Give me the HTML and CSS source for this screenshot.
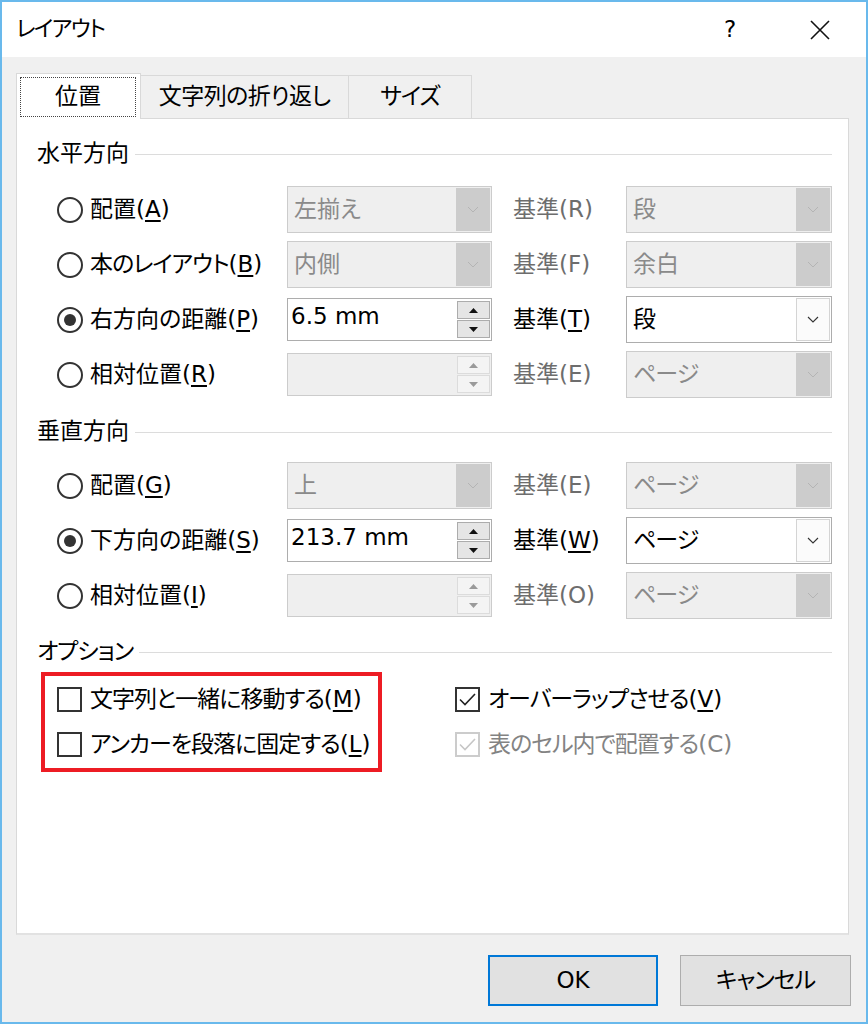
FILE: index.html
```html
<!DOCTYPE html>
<html lang="ja">
<head>
<meta charset="utf-8">
<title>レイアウト</title>
<link rel="stylesheet" href="styles.css">
</head>
<body>
<div class="window">
  <div class="titlebar">
    <span class="title">レイアウト</span>
    <span class="help">?</span>
    <span class="close"><svg width="20" height="20" viewBox="0 0 20 20"><path d="M1 1L19 19M19 1L1 19" stroke="#111" stroke-width="1.6" fill="none"/></svg></span>
  </div>
  <div class="content">
    <div class="tabs">
      <div class="tab active"><span class="focus">位置</span></div>
      <div class="tab t2">文字列の折り返し</div>
      <div class="tab t3">サイズ</div>
    </div>
    <div class="panel">
      <div class="ghead"><span>水平方向</span><i class="rule"></i></div>
      <div class="rows">
        <div class="opt"><span class="radio"></span><span>配置(<u>A</u>)</span></div>
        <div class="combo dis"><span class="val">左揃え</span><span class="dd"><svg width="12" height="7" viewBox="0 0 12 7"><path d="M1 1l5 5 5-5" fill="none" stroke="#b4b4b4" stroke-width="1"/></svg></span></div>
        <div class="base dis">基準(R)</div>
        <div class="combo dis"><span class="val">段</span><span class="dd"><svg width="12" height="7" viewBox="0 0 12 7"><path d="M1 1l5 5 5-5" fill="none" stroke="#b4b4b4" stroke-width="1"/></svg></span></div>

        <div class="opt"><span class="radio"></span><span><span class="k">本のレイアウト</span>(<u>B</u>)</span></div>
        <div class="combo dis"><span class="val">内側</span><span class="dd"><svg width="12" height="7" viewBox="0 0 12 7"><path d="M1 1l5 5 5-5" fill="none" stroke="#b4b4b4" stroke-width="1"/></svg></span></div>
        <div class="base dis">基準(F)</div>
        <div class="combo dis"><span class="val">余白</span><span class="dd"><svg width="12" height="7" viewBox="0 0 12 7"><path d="M1 1l5 5 5-5" fill="none" stroke="#b4b4b4" stroke-width="1"/></svg></span></div>

        <div class="opt"><span class="radio on"></span><span>右方向の距離(<u>P</u>)</span></div>
        <div class="spin"><span class="val">6.5 mm</span><span class="btns"><span class="sb"><svg width="9" height="5" viewBox="0 0 9 5"><path d="M0 5L4.5 0 9 5z" fill="#111"/></svg></span><span class="sb"><svg width="9" height="5" viewBox="0 0 9 5"><path d="M0 0L4.5 5 9 0z" fill="#111"/></svg></span></span></div>
        <div class="base">基準(<u>T</u>)</div>
        <div class="combo"><span class="val">段</span><span class="dd"><svg width="12" height="7" viewBox="0 0 12 7"><path d="M1 1l5 5 5-5" fill="none" stroke="#333" stroke-width="1.1"/></svg></span></div>

        <div class="opt"><span class="radio"></span><span>相対位置(<u>R</u>)</span></div>
        <div class="spin dis"><span class="val"></span><span class="btns"><span class="sb"><svg width="9" height="5" viewBox="0 0 9 5"><path d="M0 5L4.5 0 9 5z" fill="#9a9a9a"/></svg></span><span class="sb"><svg width="9" height="5" viewBox="0 0 9 5"><path d="M0 0L4.5 5 9 0z" fill="#9a9a9a"/></svg></span></span></div>
        <div class="base dis">基準(E)</div>
        <div class="combo dis"><span class="val k">ページ</span><span class="dd"><svg width="12" height="7" viewBox="0 0 12 7"><path d="M1 1l5 5 5-5" fill="none" stroke="#b4b4b4" stroke-width="1"/></svg></span></div>
      </div>

      <div class="ghead g2"><span>垂直方向</span><i class="rule"></i></div>
      <div class="rows r2">
        <div class="opt"><span class="radio"></span><span>配置(<u>G</u>)</span></div>
        <div class="combo dis"><span class="val">上</span><span class="dd"><svg width="12" height="7" viewBox="0 0 12 7"><path d="M1 1l5 5 5-5" fill="none" stroke="#b4b4b4" stroke-width="1"/></svg></span></div>
        <div class="base dis">基準(E)</div>
        <div class="combo dis"><span class="val k">ページ</span><span class="dd"><svg width="12" height="7" viewBox="0 0 12 7"><path d="M1 1l5 5 5-5" fill="none" stroke="#b4b4b4" stroke-width="1"/></svg></span></div>

        <div class="opt"><span class="radio on"></span><span>下方向の距離(<u>S</u>)</span></div>
        <div class="spin"><span class="val">213.7 mm</span><span class="btns"><span class="sb"><svg width="9" height="5" viewBox="0 0 9 5"><path d="M0 5L4.5 0 9 5z" fill="#111"/></svg></span><span class="sb"><svg width="9" height="5" viewBox="0 0 9 5"><path d="M0 0L4.5 5 9 0z" fill="#111"/></svg></span></span></div>
        <div class="base">基準(<u>W</u>)</div>
        <div class="combo"><span class="val k">ページ</span><span class="dd"><svg width="12" height="7" viewBox="0 0 12 7"><path d="M1 1l5 5 5-5" fill="none" stroke="#333" stroke-width="1.1"/></svg></span></div>

        <div class="opt"><span class="radio"></span><span>相対位置(<u>I</u>)</span></div>
        <div class="spin dis"><span class="val"></span><span class="btns"><span class="sb"><svg width="9" height="5" viewBox="0 0 9 5"><path d="M0 5L4.5 0 9 5z" fill="#9a9a9a"/></svg></span><span class="sb"><svg width="9" height="5" viewBox="0 0 9 5"><path d="M0 0L4.5 5 9 0z" fill="#9a9a9a"/></svg></span></span></div>
        <div class="base dis">基準(O)</div>
        <div class="combo dis"><span class="val k">ページ</span><span class="dd"><svg width="12" height="7" viewBox="0 0 12 7"><path d="M1 1l5 5 5-5" fill="none" stroke="#b4b4b4" stroke-width="1"/></svg></span></div>
      </div>

      <div class="ghead g3"><span class="k">オプション</span><i class="rule"></i></div>
      <div class="opts">
        <div class="redbox">
          <div class="chk"><span class="box"></span><span><span class="k">文字列と一緒に移動する</span>(<u>M</u>)</span></div>
          <div class="chk"><span class="box"></span><span><span class="k">アンカーを段落に固定する</span>(<u>L</u>)</span></div>
        </div>
        <div class="rcol">
          <div class="chk"><span class="box"><svg width="19" height="15" viewBox="0 0 19 15"><path d="M2 7.5l5 5L17 2" fill="none" stroke="#222" stroke-width="1.6"/></svg></span><span><span class="k">オーバーラップさせる</span>(<u>V</u>)</span></div>
          <div class="chk dis"><span class="box"><svg width="19" height="15" viewBox="0 0 19 15"><path d="M2 7.5l5 5L17 2" fill="none" stroke="#c6c6c6" stroke-width="1.6"/></svg></span><span><span class="k">表のセル内で配置する</span>(C)</span></div>
        </div>
      </div>
    </div>
    <div class="buttons">
      <div class="btn ok">OK</div>
      <div class="btn"><span class="k">キャンセル</span></div>
    </div>
  </div>
</div>
</body>
</html>
```

FILE: styles.css
```css
* { box-sizing: border-box; }
html, body { margin: 0; padding: 0; }
body {
  width: 868px;
  height: 1024px;
  font-family: "DejaVu Sans", "Noto Sans CJK JP", sans-serif;
  font-feature-settings: "palt";
  font-size: 23px;
  line-height: 1.2;
  color: #000;
  background: #fff;
}
u { text-decoration-thickness: 1.5px; text-underline-offset: 3px; }
.k { letter-spacing: -1px; }

.window {
  width: 868px;
  height: 1024px;
  border: 2px solid #69b9ec;
  background: #f0f0f0;
  display: flex;
  flex-direction: column;
}

.titlebar {
  flex: none;
  height: 55px;
  background: #fff;
  display: flex;
  align-items: center;
  padding-left: 14px;
}
.title { font-size: 22px; letter-spacing: -1.5px; }
.help { margin-left: auto; width: 46px; text-align: center; font-size: 23px; }
.close { width: 60px; margin-left: 37px; margin-right: 16px; display: flex; justify-content: center; align-items: center; }

.content { flex: 1; padding: 16px 17px 0 14px; }

.tabs { height: 45px; display: flex; align-items: flex-end; }
.tab {
  height: 43px;
  border: 1px solid #d9d9d9;
  border-bottom: none;
  background: #f0f0f0;
  display: flex;
  align-items: center;
  justify-content: center;
}
.tab.active {
  width: 125px;
  height: 46px;
  margin-bottom: -1px;
  background: #fff;
  position: relative;
  z-index: 1;
  padding: 3px 4px 2px 3px;
}
.focus {
  width: 100%;
  height: 100%;
  border: 1px dotted #444;
  display: flex;
  align-items: center;
  justify-content: center;
}
.t2 { width: 208px; border-left: none; letter-spacing: -0.5px; }
.t3 { width: 123px; border-left: none; letter-spacing: -1px; }

.panel {
  height: 817px;
  background: #fff;
  border: 1px solid #d9d9d9;
  border-bottom-width: 2px;
  border-bottom-color: #e2e2e2;
  padding: 21px 16px 0 20px;
}

.ghead { height: 28px; display: flex; align-items: center; }
.ghead .rule { flex: 1; height: 1px; background: #dcdcdc; margin-left: 6px; }
.g2 { margin-top: 16px; }
.g3 { margin-top: 15px; }

.rows {
  display: grid;
  grid-template-columns: 230px 205px 134px 206px;
  grid-auto-rows: 55px;
  align-items: center;
  margin: 14px 0 0 20px;
}
.r2 { margin-top: 12px; }

.opt { display: flex; align-items: center; gap: 7px; white-space: nowrap; }
.radio {
  flex: none;
  width: 26px;
  height: 26px;
  border: 2px solid #333;
  border-radius: 50%;
  display: flex;
  align-items: center;
  justify-content: center;
}
.radio.on::after {
  content: "";
  width: 12px;
  height: 12px;
  border-radius: 50%;
  background: #333;
}

.base { padding-left: 21px; white-space: nowrap; }
.dis { color: #6d6d6d; }

.combo {
  height: 47px;
  border: 1px solid #adadad;
  background: #fff;
  display: flex;
  padding: 1px;
}
.combo .val { flex: 1; padding-left: 5px; display: flex; align-items: center; }
.combo .dd {
  width: 34px;
  border: 1px solid #d4d4d4;
  background: #fbfbfb;
  display: flex;
  align-items: center;
  justify-content: center;
}
.combo.dis { border-color: #cccccc; background: #efefef; color: #8a8a8a; }
.combo.dis .dd { background: #cccccc; border-color: #cccccc; }

.spin {
  height: 43px;
  border: 1px solid #adadad;
  background: #fff;
  display: flex;
  padding: 2px 1px 2px 1px;
}
.spin .val { flex: 1; padding-left: 2px; display: flex; align-items: center; padding-bottom: 5px; }
.spin .btns { width: 33px; display: flex; flex-direction: column; gap: 1px; }
.sb {
  flex: 1;
  border: 1px solid #acacac;
  background: #e5e5e5;
  display: flex;
  align-items: center;
  justify-content: center;
}
.spin.dis { border-color: #cccccc; background: #efefef; }
.spin.dis .sb { border-color: #dcdcdc; background: #f4f4f4; }

.opts { display: flex; margin-top: 6px; margin-left: 4px; }
.redbox {
  width: 341px;
  border: 4px solid #ed1c24;
  padding: 1px 0 1px 12px;
}
.rcol { margin-left: 73px; padding-top: 5px; }
.chk { height: 45px; display: flex; align-items: center; gap: 8px; white-space: nowrap; }
.box {
  flex: none;
  width: 25px;
  height: 25px;
  border: 2px solid #333;
  display: flex;
  align-items: center;
  justify-content: center;
}
.chk.dis { color: #838383; }
.chk.dis .box { border-color: #cccccc; }

.buttons {
  display: flex;
  justify-content: flex-end;
  gap: 22px;
  margin-top: 20px;
  margin-right: -2px;
}
.btn {
  width: 171px;
  height: 51px;
  border: 1px solid #adadad;
  background: #e1e1e1;
  display: flex;
  align-items: center;
  justify-content: center;
}
.btn.ok { width: 170px; border: 2px solid #0078d7; }
```
